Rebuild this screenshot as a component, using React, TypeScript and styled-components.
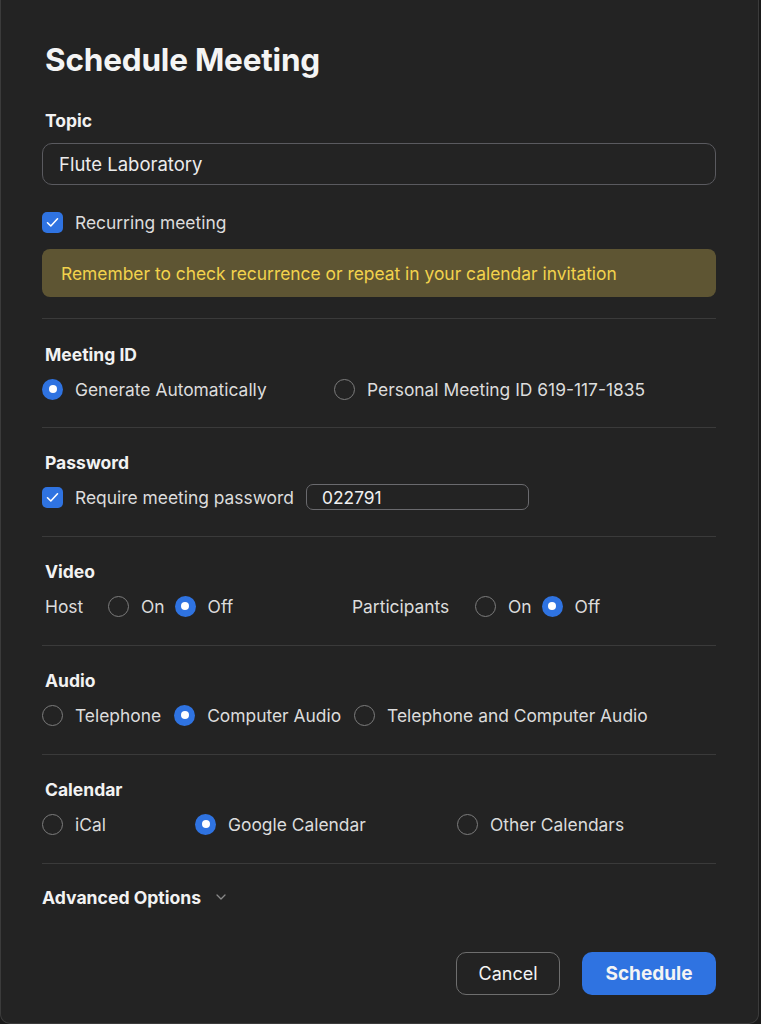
import React from "react";
import styled, { createGlobalStyle } from "styled-components";

const Global = createGlobalStyle`
  html, body { margin: 0; padding: 0; background: #1a1a1a; }
  body { font-family: Inter, "Noto Sans", "Liberation Sans", sans-serif; }
  * { box-sizing: border-box; }
`;

const Window = styled.div`
  width: 759px;
  height: 1024px;
  background: #232323;
  border-left: 1px solid #3b3b3b;
  border-right: 1px solid #3b3b3b;
  border-bottom: 1px solid #3b3b3b;
  border-radius: 0 0 10px 10px;
  padding: 41px 42px 0 41px;
  display: flex;
  flex-direction: column;
  color: #dcdcdc;
  -webkit-font-smoothing: antialiased;
`;

const Title = styled.h1`
  margin: 0 0 0 3px;
  font-size: 31.5px;
  line-height: 38px;
  font-weight: 700;
  color: #f4f4f4;
  letter-spacing: -0.2px;
`;

const Section = styled.section<{ $top?: number; $bottom?: number }>`
  display: flex;
  flex-direction: column;
  padding-top: ${(p) => p.$top ?? 25}px;
  padding-bottom: ${(p) => p.$bottom ?? 27}px;
  border-bottom: 1px solid #3a3a3a;
`;

const Heading = styled.div`
  font-size: 17.5px;
  line-height: 20px;
  font-weight: 700;
  color: #f2f2f2;
  padding-left: 3px;
  margin-bottom: 12px;
`;

const TextInput = styled.div`
  height: 42px;
  border: 1px solid #5a5a5f;
  border-radius: 10px;
  padding: 0 16px;
  display: flex;
  align-items: center;
  font-size: 18.5px;
  color: #ececec;
`;

const Row = styled.div<{ $gap?: number; $top?: number }>`
  display: flex;
  align-items: center;
  height: 24px;
  gap: ${(p) => p.$gap ?? 0}px;
  margin-top: ${(p) => p.$top ?? 0}px;
`;

const GridRow = styled.div<{ $cols: string }>`
  display: grid;
  grid-template-columns: ${(p) => p.$cols};
  align-items: center;
  height: 24px;
`;

const Option = styled.label`
  display: flex;
  align-items: center;
  gap: 12px;
  font-size: 17.4px;
  color: #dcdcdc;
  white-space: nowrap;
`;

const RadioCircle = styled.span<{ $on?: boolean }>`
  width: 21px;
  height: 21px;
  border-radius: 50%;
  flex: none;
  display: flex;
  align-items: center;
  justify-content: center;
  background: ${(p) => (p.$on ? "#2f73e1" : "transparent")};
  border: ${(p) => (p.$on ? "none" : "1.5px solid #7c7c7c")};
  &::after {
    content: "";
    display: ${(p) => (p.$on ? "block" : "none")};
    width: 8px;
    height: 8px;
    border-radius: 50%;
    background: #fff;
  }
`;

const CheckBox = styled.span`
  width: 21px;
  height: 21px;
  border-radius: 5px;
  background: #2f73e1;
  flex: none;
  display: flex;
  align-items: center;
  justify-content: center;
`;

const Banner = styled.div`
  margin-top: 15px;
  height: 48px;
  border-radius: 8px;
  background: #5e5533;
  color: #f2d24c;
  font-size: 17.4px;
  display: flex;
  align-items: center;
  padding-left: 19px;
`;

const SmallInput = styled.div`
  width: 223px;
  height: 26px;
  border: 1px solid #6a6a6e;
  border-radius: 7px;
  padding: 0 15px;
  display: flex;
  align-items: center;
  font-size: 17.4px;
  color: #f0f0f0;
  margin-left: 12px;
`;

const Group = styled.div<{ $width?: number }>`
  display: flex;
  align-items: center;
  width: ${(p) => (p.$width ? `${p.$width}px` : "auto")};
`;

const GroupLabel = styled.span<{ $width: number; $pad?: number }>`
  width: ${(p) => p.$width}px;
  padding-left: ${(p) => p.$pad ?? 0}px;
  font-size: 17.4px;
  color: #dcdcdc;
`;

const Advanced = styled.div`
  display: flex;
  align-items: center;
  gap: 15px;
  margin-top: 23px;
  height: 20px;
  font-size: 17.6px;
  font-weight: 700;
  color: #f2f2f2;
`;

const Footer = styled.div`
  display: flex;
  justify-content: flex-end;
  gap: 22px;
  margin-top: 45px;
`;

const Button = styled.button<{ $primary?: boolean }>`
  height: 43px;
  border-radius: 10px;
  font-family: inherit;
  font-size: ${(p) => (p.$primary ? "19px" : "18px")};
  padding: 0;
  width: ${(p) => (p.$primary ? "134px" : "104px")};
  font-weight: ${(p) => (p.$primary ? 700 : 400)};
  color: #f4f4f4;
  background: ${(p) => (p.$primary ? "#2f73e1" : "transparent")};
  border: ${(p) => (p.$primary ? "none" : "1px solid #6e6e6e")};
`;

const Check = () => (
  <svg width="13" height="11" viewBox="0 0 13 11" fill="none">
    <path d="M1.5 5.8 L4.8 9 L11.5 1.8" stroke="#fff" strokeWidth="1.6" strokeLinecap="round" strokeLinejoin="round" />
  </svg>
);

const Chevron = () => (
  <svg width="10" height="6" viewBox="0 0 10 6" fill="none">
    <path d="M1 1 L5 5 L9 1" stroke="#8a8a8a" strokeWidth="1.3" strokeLinecap="round" strokeLinejoin="round" />
  </svg>
);

const Radio = ({ on, label }: { on?: boolean; label: string }) => (
  <Option>
    <RadioCircle $on={on} />
    {label}
  </Option>
);

export default function App() {
  return (
    <>
      <Global />
      <Window>
        <Title>Schedule Meeting</Title>
        <Section $top={32} $bottom={21}>
          <Heading>Topic</Heading>
          <TextInput>Flute Laboratory</TextInput>
          <Row $top={25}>
            <Option>
              <CheckBox>
                <Check />
              </CheckBox>
              Recurring meeting
            </Option>
          </Row>
          <Banner>Remember to check recurrence or repeat in your calendar invitation</Banner>
        </Section>

        <Section $top={26} $bottom={26}>
          <Heading>Meeting ID</Heading>
          <GridRow $cols="292px auto">
            <Radio on label="Generate Automatically" />
            <Radio label="Personal Meeting ID 619-117-1835" />
          </GridRow>
        </Section>

        <Section>
          <Heading>Password</Heading>
          <Row>
            <Option>
              <CheckBox>
                <Check />
              </CheckBox>
              Require meeting password
            </Option>
            <SmallInput>022791</SmallInput>
          </Row>
        </Section>

        <Section>
          <Heading>Video</Heading>
          <Row>
            <Group $width={310}>
              <GroupLabel $width={66} $pad={3}>Host</GroupLabel>
              <Row $gap={10}>
                <Radio label="On" />
                <Radio on label="Off" />
              </Row>
            </Group>
            <Group>
              <GroupLabel $width={123}>Participants</GroupLabel>
              <Row $gap={10}>
                <Radio label="On" />
                <Radio on label="Off" />
              </Row>
            </Group>
          </Row>
        </Section>

        <Section>
          <Heading>Audio</Heading>
          <Row $gap={13}>
            <Radio label="Telephone" />
            <Radio on label="Computer Audio" />
            <Radio label="Telephone and Computer Audio" />
          </Row>
        </Section>

        <Section>
          <Heading>Calendar</Heading>
          <GridRow $cols="153px 262px auto">
            <Radio label="iCal" />
            <Radio on label="Google Calendar" />
            <Radio label="Other Calendars" />
          </GridRow>
        </Section>

        <Advanced>
          Advanced Options
          <Chevron />
        </Advanced>

        <Footer>
          <Button>Cancel</Button>
          <Button $primary>Schedule</Button>
        </Footer>
      </Window>
    </>
  );
}
